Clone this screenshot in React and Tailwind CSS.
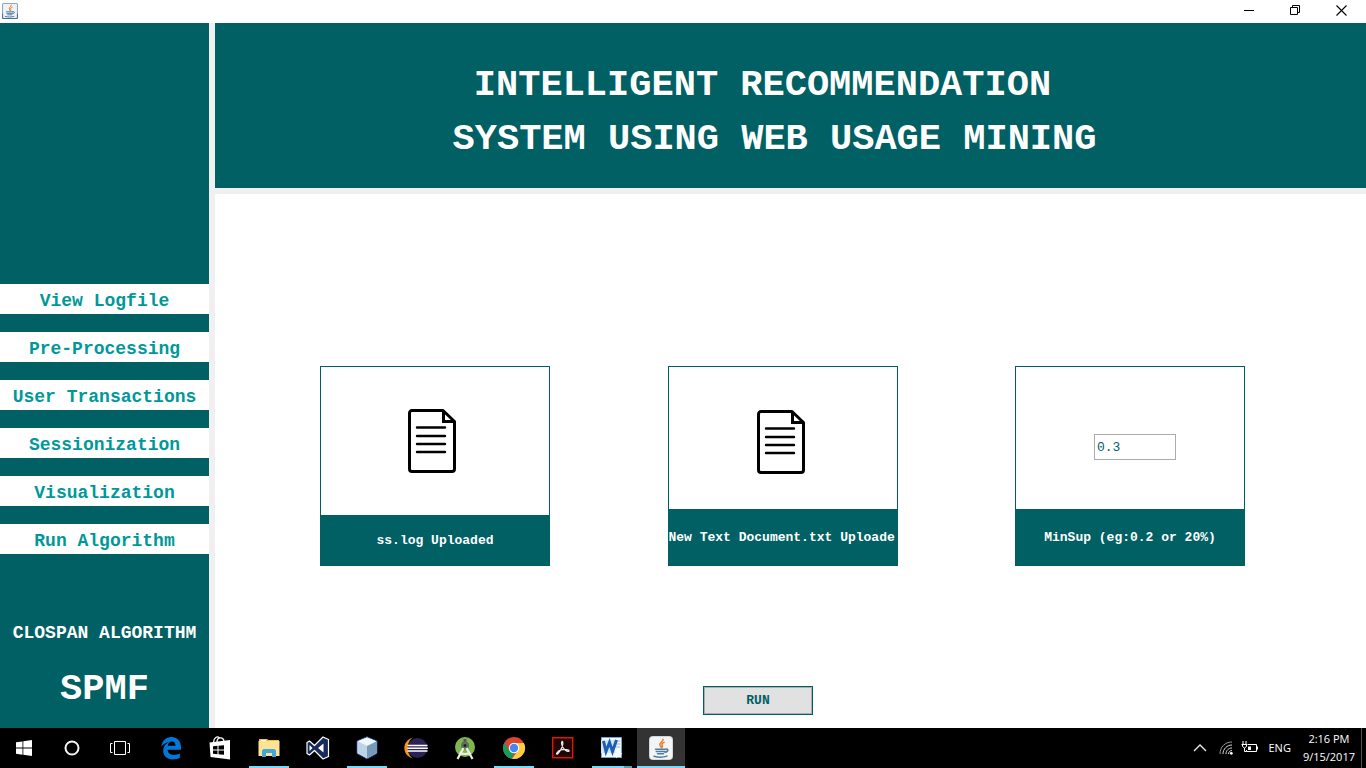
import React from "react";

const JavaCup = () => (
  <>
    <path d="M14 3.200c.8 2.400-4 3.300-3 6 .4 1 1.200 1.400 1.200 2.400M15.200 6.400c-2.200.9-2.800 1.800-2 3 .5.9.3 1.500-.5 2.200" fill="none" stroke="#ee7d22" strokeWidth="1.500" strokeLinecap="round" />
    <path d="M6.500 13.200h9.800M7.300 15.500h8.400M8.500 17.700h6M5 20.300c3.500 1 9.500 1 13-.2M16.500 13.200c3.200-.9 3.300 2.400-.5 3" fill="none" stroke="#4d7da4" strokeWidth="1.500" strokeLinecap="round" />
  </>
);

function JavaIcon({ className, title }) {
  return (
    <svg viewBox="0 0 24 24" className={className} aria-hidden="true">
      {title ? (
        <>
          <rect x="0.8" y="0.8" width="22.4" height="22.4" rx="1.500" fill="#eef2f6" stroke="#8fa6b8" strokeWidth="1.600" />
          <path d="M.8 16v5.700q0 1.500 1.500 1.500h19.400q1.500 0 1.500-1.500V16" fill="none" stroke="#4a6f8c" strokeWidth="1.600" />
        </>
      ) : (
        <rect x="0.5" y="0.5" width="23" height="23" rx="3" fill="#f4f4f4" stroke="#d0d8de" />
      )}
      <JavaCup />
    </svg>
  );
}

function DocumentIcon() {
  return (
    <svg viewBox="0 0 48 64" className="h-16 w-12" fill="none" stroke="#000" aria-hidden="true">
      <path d="M35 1.500H4A2.500 2.500 0 0 0 1.500 4v56A2.500 2.500 0 0 0 4 62.500h40a2.500 2.500 0 0 0 2.500-2.500V12.500z" strokeWidth="3" strokeLinejoin="round" />
      <path d="M35.500 2v10.500H46" strokeWidth="3" />
      <path d="M9 18.500h28M9 27h28M9 35h28M9 43h28" strokeWidth="2.400" strokeLinecap="round" />
    </svg>
  );
}

const Icon = ({ children }) => (
  <svg viewBox="0 0 24 24" className="h-6 w-6" aria-hidden="true">{children}</svg>
);

const StartIcon = () => (
  <Icon><path fill="#fff" d="M4 6.300l6.500-.9V11.500H4zM11.300 5.300L20 4v7.500h-8.700zM4 12.500h6.500v6.200L4 17.800zM11.300 12.500H20V20l-8.700-1.200z" /></Icon>
);
const CortanaIcon = () => (
  <Icon><circle cx="12" cy="12" r="6.500" fill="none" stroke="#f4f4f4" strokeWidth="2" /></Icon>
);
const TaskViewIcon = () => (
  <Icon><path d="M6.500 5.500h11v13h-11zM4.500 7.500h-2v9h2M19.500 7.500h2v9h-2" fill="none" stroke="#fff" /></Icon>
);
const EdgeIcon = () => (
  <Icon><path fill="#0078d7" d="M2.200 10.800C3 4.800 7 1 12.300 1 18.500 1 22 5.300 22 11.200v2.500H8.600c.2 3.600 3.200 5.200 6.500 5.200 2.200 0 4.100-.6 5.800-1.600v4.500c-2 1.100-4.400 1.700-7 1.700-6 0-9.700-3.400-9.700-8.700 0-4 2.100-7.100 5.700-8.600-3.400.4-6 2-7.700 4.600zm6.600-1h7.700c0-2.700-1.300-4.200-3.600-4.200-2.100 0-3.700 1.600-4.100 4.200z" /></Icon>
);
const StoreIcon = () => (
  <Icon>
    <path d="M5.500 6.500c0-5 4-7 6-4.500M9 6c0-5 7-6 7 0" fill="none" stroke="#fff" strokeWidth="1.300" />
    <path d="M1.500 6.500L22 4v19.500L2.500 21z" fill="#fff" />
    <path fill="#000" d="M5 10.200l4.500-.4v3.700H5zM10.500 9.700l5.500-.5v4.300h-5.500zM5 14.500h4.500v3.700L5 17.800zM10.500 14.500H16v4.300l-5.500-.5z" />
  </Icon>
);
const FolderIcon = () => (
  <Icon>
    <path fill="#f5bd3b" d="M2 3h8l1.500 1H22v3H2z" />
    <path fill="#ffe394" d="M1.500 5h21v15h-21z" />
    <path fill="#fff" d="M4 4h5v1H4z" />
    <path fill="#41a9d8" d="M5 21v-6.500l1.500-1.500h11l1.500 1.500V21h-4v-4H9v4z" />
  </Icon>
);
const VisualStudioIcon = () => (
  <Icon>
    <path d="M1 6.500L3.500 5l5 4.500L17 1l5.500 2.500v17L17 23l-8.500-8.500-5 4.500L1 17.500z" fill="#162b5c" stroke="#fff" strokeWidth="1.200" strokeLinejoin="round" />
    <path d="M3.500 9v6l3-3zM17.500 7.500v9L12 12z" fill="#fff" />
  </Icon>
);
const CubeIcon = () => (
  <Icon>
    <path d="M12 .8L22 5v12.500L12 23 2 17.500V5z" fill="#d9eaf4" stroke="#263a7c" />
    <path d="M2.500 5.500L12 10v12.300l-9.500-5z" fill="#bcd4e5" />
    <path d="M21.500 5.500L12 10v12.300l9.500-5z" fill="#759bb9" />
    <path d="M12 1.500L21 5l-9 4.500L3 5z" fill="#edf8fc" />
  </Icon>
);
const EclipseIcon = () => (
  <Icon>
    <path d="M9 1.500C-2.500 4.500-2.500 19.500 9 22.500 2 18.500 2 5.500 9 1.500z" fill="#f7941e" />
    <circle cx="13.500" cy="12" r="10" fill="#2c2255" />
    <path d="M3.500 9.500h20M3.200 12.200h20.600M3.500 15h20" stroke="#fff" strokeWidth="1.500" />
  </Icon>
);
const AndroidStudioIcon = () => (
  <Icon>
    <circle cx="12" cy="11" r="10" fill="#7eb84b" />
    <path d="M12 3v4" stroke="#555" strokeWidth="3" />
    <circle cx="12" cy="9.500" r="4" fill="#626b66" />
    <circle cx="12" cy="9.500" r="1.500" fill="#222" />
    <path d="M10.500 12L4.500 23M13.500 12l6 11M6.500 16.500c3 2 8 2 11 0" fill="none" stroke="#eee" strokeWidth="2.200" />
  </Icon>
);
const ChromeIcon = () => (
  <Icon>
    <circle cx="12" cy="12" r="11" fill="#dc4437" />
    <path d="M2.500 6.500L7.200 14.800 12 17l-2 5.800A11 11 0 0 1 2.500 6.500z" fill="#169c5a" />
    <path d="M12 7h9.800A11 11 0 0 1 10 22.800L16.500 14z" fill="#ffcd42" />
    <circle cx="12" cy="12" r="5.200" fill="#fff" />
    <circle cx="12" cy="12" r="4.200" fill="#4787f2" />
  </Icon>
);
const AcrobatIcon = () => (
  <Icon>
    <path d="M1.700 1.700h20v20h-20z" fill="#210506" stroke="#e1140a" strokeWidth="1.400" />
    <path d="M5.500 17.500c2-4 8-5 12-3.500 2 1.500-1 2-3 .3-3-2.500-5-7-3.500-9 1.500 0 1 5-1.500 9s-4 4.500-4 3.200z" fill="none" stroke="#eee" strokeWidth="1.200" />
  </Icon>
);
const WordIcon = () => (
  <Icon>
    <path d="M1.500 1.500h20v20h-20z" fill="#f5faff" stroke="#6fa8dc" />
    <path d="M15 5h5M16 8h4M16 11h4" stroke="#8fb4dc" />
    <path d="M1 4h16v13H1z" fill="#d3e6f8" />
    <path d="M3.500 5l2.500 10.500L9.500 6.500l3 9L16.500 4" fill="none" stroke="#1c5eb4" strokeWidth="3" />
    <path d="M15 12l7.500 6-3.500.5-3 4z" fill="#fff" />
  </Icon>
);

const launchers = [
  ["Start", StartIcon],
  ["Cortana", CortanaIcon],
  ["Task View", TaskViewIcon],
];

const apps = [
  ["Microsoft Edge", EdgeIcon, false],
  ["Store", StoreIcon, false],
  ["File Explorer", FolderIcon, true],
  ["Visual Studio", VisualStudioIcon, false],
  ["NetBeans", CubeIcon, true],
  ["Eclipse", EclipseIcon, false],
  ["Android Studio", AndroidStudioIcon, false],
  ["Chrome", ChromeIcon, true],
  ["Acrobat Reader", AcrobatIcon, false],
];

const menu = ["View Logfile", "Pre-Processing", "User Transactions", "Sessionization", "Visualization", "Run Algorithm"];

function TitleBar() {
  return (
    <header className="flex h-[23px] shrink-0 items-center justify-between bg-white px-0.5 pb-0.5">
      <JavaIcon className="h-4 w-4" title />
      <div className="flex">
        <button aria-label="Minimize" className="flex h-5 w-[46px] items-center justify-center">
          <svg viewBox="0 0 11 11" className="h-[11px] w-[11px]"><path d="M0 5.500h10" stroke="#000" /></svg>
        </button>
        <button aria-label="Restore" className="flex h-5 w-[46px] items-center justify-center">
          <svg viewBox="0 0 11 11" className="h-[11px] w-[11px]" fill="none" stroke="#000"><path d="M.5 2.500h7v7h-7zM2.500 2.500v-2h7v7h-2" /></svg>
        </button>
        <button aria-label="Close" className="flex h-5 w-[46px] items-center justify-center">
          <svg viewBox="0 0 11 11" className="h-[11px] w-[11px]"><path d="M.5.5l10 10M10.500.5l-10 10" stroke="#000" strokeWidth="1.100" /></svg>
        </button>
      </div>
    </header>
  );
}

function Sidebar() {
  return (
    <aside className="flex w-[209px] shrink-0 flex-col bg-[#006064] pt-[261px] text-center font-bold text-white">
      <nav className="flex flex-col gap-[18px]">
        {menu.map((label) => (
          <button key={label} className="h-[30px] bg-white pt-1 text-lg leading-6 text-[#009899]">{label}</button>
        ))}
      </nav>
      <h2 className="pt-[67px] text-lg leading-6">CLOSPAN ALGORITHM</h2>
      <p className="pt-6 text-[37px] leading-10">SPMF</p>
    </aside>
  );
}

function Card({ label, children, tall = true }) {
  return (
    <section className="flex h-[200px] w-[230px] flex-col overflow-hidden border border-[#006064]">
      <div className="flex min-h-0 flex-1 items-center justify-center">{children}</div>
      <div className={`${tall ? "h-14" : "h-[50px]"} flex shrink-0 items-center bg-[#006064] pt-0.5 text-[13px] leading-5 font-bold whitespace-nowrap text-white`}>
        {label}
      </div>
    </section>
  );
}

function Taskbar() {
  return (
    <footer className="flex h-10 shrink-0 justify-between bg-black font-['Open_Sans','Noto_Sans',sans-serif] text-[11px] text-white">
      <div className="flex">
        <div className="mr-[3px] flex">
          {launchers.map(([name, Glyph]) => (
            <button key={name} aria-label={name} className="flex w-12 items-center justify-center"><Glyph /></button>
          ))}
        </div>
        <div className="flex gap-px">
          {apps.map(([name, Glyph, open]) => (
            <button key={name} aria-label={name} className="flex w-12 flex-col items-center justify-between pt-2">
              <Glyph />
              <span className={`h-0.5 w-10 ${open ? "bg-[#76d9fa]" : "bg-transparent"}`} />
            </button>
          ))}
          <button aria-label="Word" className="flex w-12 flex-col items-center justify-between pt-2">
            <WordIcon />
            <span className="flex h-0.5 w-10 bg-[#5a9fb7]"><span className="w-8 bg-[#76d9fa]" /></span>
          </button>
          <button aria-label="Java" className="flex w-12 flex-col items-center justify-between bg-[#333] pt-2">
            <JavaIcon className="h-6 w-6" />
            <span className="h-0.5 w-full bg-[#76d9fa]" />
          </button>
        </div>
      </div>
      <div className="flex items-center">
        <button aria-label="Show hidden icons" className="mr-3">
          <svg viewBox="0 0 14 14" className="h-3.5 w-3.5"><path d="M1 10l6-6 6 6" fill="none" stroke="#eee" strokeWidth="1.300" /></svg>
        </button>
        <svg viewBox="0 0 14 14" className="mr-2 h-3.5 w-3.5" aria-hidden="true">
          <g fill="none" stroke="#ddd">
            <path d="M1 13C1 6 6 1 13 1" stroke="#999" /><path d="M4 13c0-5 4-9 9-9M7 13c0-3.500 2.500-6 6-6M9.500 13c0-2 1.500-3.500 3.500-3.500" />
          </g>
          <circle cx="12.300" cy="12.300" r="1.400" fill="#fff" />
        </svg>
        <svg viewBox="0 0 17 14" className="mr-2.5 h-3.5 w-[17px]" fill="none" stroke="#fff" aria-hidden="true">
          <path d="M7 3.500h8.500v7h-10V9M16.500 5.500v3M2 0v3M5 0v3M.5 3.500h6M1.500 3.500v2l2 1.500 2-1.500v-2M3.500 7v3.500h2" />
          <path d="M7 5.500h3v3.500H7z" fill="#fff" stroke="none" />
        </svg>
        <span className="mr-3">ENG</span>
        <div className="mr-1.5 text-center leading-[18px]">
          <div>2:16 PM</div>
          <div>9/15/2017</div>
        </div>
        <button aria-label="Show desktop" className="h-full w-[5px] border-l border-[#555]" />
      </div>
    </footer>
  );
}

export default function App() {
  return (
    <div className="flex min-h-screen flex-col bg-white font-['Courier_New','Liberation_Mono',monospace]">
      <TitleBar />
      <div className="flex flex-1 gap-1.5 bg-[#f0f0f0]">
        <Sidebar />
        <div className="flex min-w-0 flex-1 flex-col gap-1.5">
          <div className="h-[165px] bg-[#006064] pt-[35px] pr-8 text-center text-[37px] leading-[54px] font-bold text-white">
            <h1>
              <span className="block pr-6">INTELLIGENT RECOMMENDATION</span>
              <span className="block">SYSTEM USING WEB USAGE MINING</span>
            </h1>
          </div>
          <main className="flex flex-1 flex-col bg-white pt-[172px]">
            <div className="flex justify-between pr-[121px] pl-[105px]">
              <Card tall={false} label={<span className="w-full text-center">ss.log Uploaded</span>}>
                <div className="pr-1.5"><DocumentIcon /></div>
              </Card>
              <Card label={<span>New Text Document.txt Uploade</span>}>
                <div className="pt-2 pr-1"><DocumentIcon /></div>
              </Card>
              <Card label={<label htmlFor="minsup" className="w-full text-center">MinSup (eg:0.2 or 20%)</label>}>
                <div className="pt-[18px] pl-2.5">
                  <input id="minsup" type="text" defaultValue="0.3" className="block h-[26px] w-[82px] border border-[#aaacac] bg-white px-0.5 text-[13px] text-[#006064] outline-none" />
                </div>
              </Card>
            </div>
            <div className="flex justify-center pt-[120px] pr-[65px]">
              <button className="h-[29px] w-[110px] border border-[#006064] bg-[#e1e1e1] text-[13px] font-bold text-[#006064] inset-ring inset-ring-[#adadad]">RUN</button>
            </div>
          </main>
        </div>
      </div>
      <Taskbar />
    </div>
  );
}
